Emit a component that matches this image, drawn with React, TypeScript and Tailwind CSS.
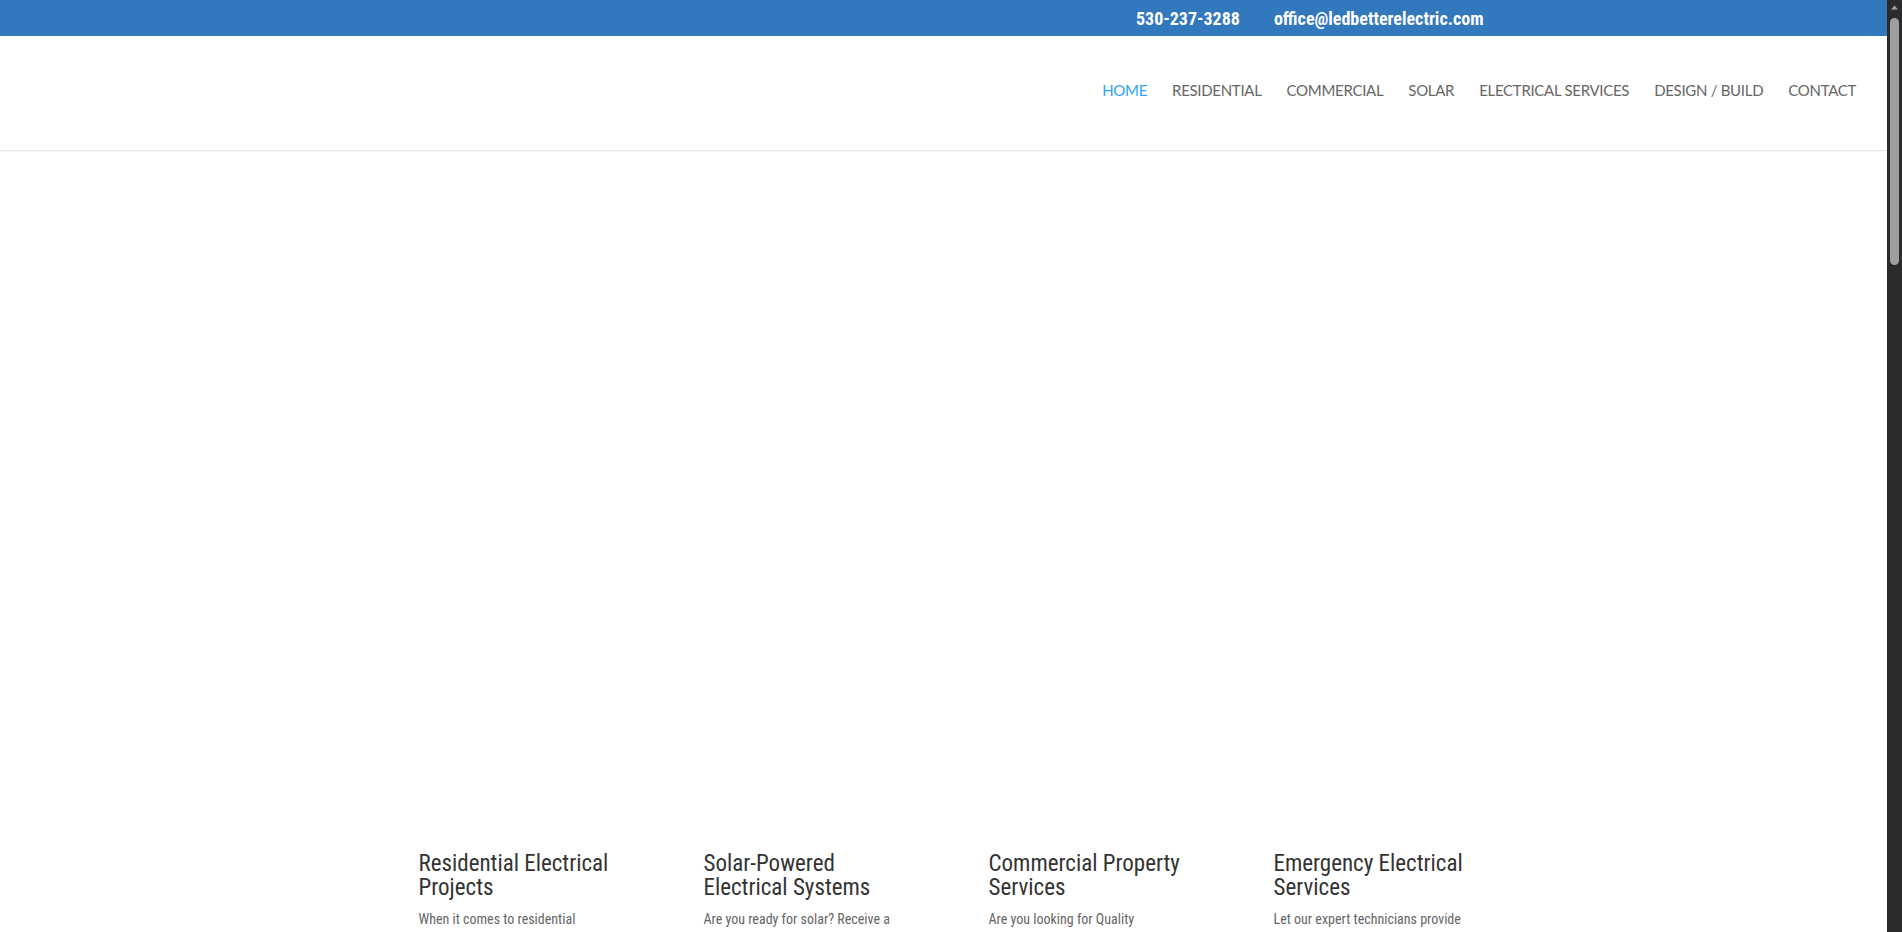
import React from "react";

const cond = { fontFamily: '"Roboto Condensed", "Liberation Sans Narrow", "Arial Narrow", Roboto, sans-serif' };

const navItems = ["HOME", "RESIDENTIAL", "COMMERCIAL", "SOLAR", "ELECTRICAL SERVICES", "DESIGN / BUILD", "CONTACT"];

const blurbs = [
  {
    title: ["Residential Electrical", "Projects"],
    body: ["When it comes to residential", "electrical projects, our licensed", "electricians deliver safe, code", "compliant work on every job."],
  },
  {
    title: ["Solar-Powered", "Electrical Systems"],
    body: ["Are you ready for solar? Receive a", "free consultation and estimate", "for a system designed around", "your home or business."],
  },
  {
    title: ["Commercial Property", "Services"],
    body: ["Are you looking for Quality", "commercial electrical work done", "on time and on budget? We", "can help."],
  },
  {
    title: ["Emergency Electrical", "Services"],
    body: ["Let our expert technicians provide", "fast, reliable service when you", "need it most, day or night,", "all year round."],
  },
];

function Scrollbar() {
  return (
    <div className="flex h-[932px] w-[15px] shrink-0 flex-col items-center bg-[#2b2b2b]">
      <svg width="15" height="15" viewBox="0 0 15 15" className="shrink-0">
        <path d="M4 9.5 L7.5 5.5 L11 9.5 Z" fill="#a3a3a3" />
      </svg>
      <div className="mt-[3px] h-[247px] w-[9px] rounded-full bg-[#9f9f9f]" />
    </div>
  );
}

export default function App() {
  return (
    <div className="flex h-[932px] overflow-hidden bg-white">
      <div className="min-w-0 flex-1">
        <div className="h-[36px] bg-[#3278bd]">
          <div className="mx-auto flex h-full w-[1080px] items-center justify-end gap-[34px] text-[18px] font-bold text-white" style={cond}>
            <span>530-237-3288</span>
            <span>office@ledbetterelectric.com</span>
          </div>
        </div>
        <header className="flex h-[115px] items-center justify-end border-b border-[#e4e4e4] pb-[6px] pr-[31px] shadow-[0_1px_0_rgba(0,0,0,0.02)]">
          <nav className="flex gap-[25px] text-[15px] tracking-[-0.3px] text-[#666666]" style={{ fontFamily: 'Lato, "Open Sans", sans-serif' }}>
            {navItems.map((n, i) => (
              <a key={n} className={i === 0 ? "text-[#2ea3f2]" : ""}>
                {n}
              </a>
            ))}
          </nav>
        </header>
        <main>
          <div className="h-[701px]" />
          <div className="mx-auto grid w-[1050px] grid-cols-4 gap-[90px]">
            {blurbs.map((b) => (
              <div key={b.title[0]} style={cond}>
                <h4 className="whitespace-nowrap text-[23px] leading-[24px] text-[#333333]">
                  {b.title[0]}
                  <br />
                  {b.title[1]}
                </h4>
                <p className="mt-[6px] whitespace-nowrap text-[14px] leading-[26px] text-[#666666]">
                  {b.body.map((l, i) => (
                    <React.Fragment key={i}>
                      {l}
                      <br />
                    </React.Fragment>
                  ))}
                </p>
              </div>
            ))}
          </div>
        </main>
      </div>
      <Scrollbar />
    </div>
  );
}
